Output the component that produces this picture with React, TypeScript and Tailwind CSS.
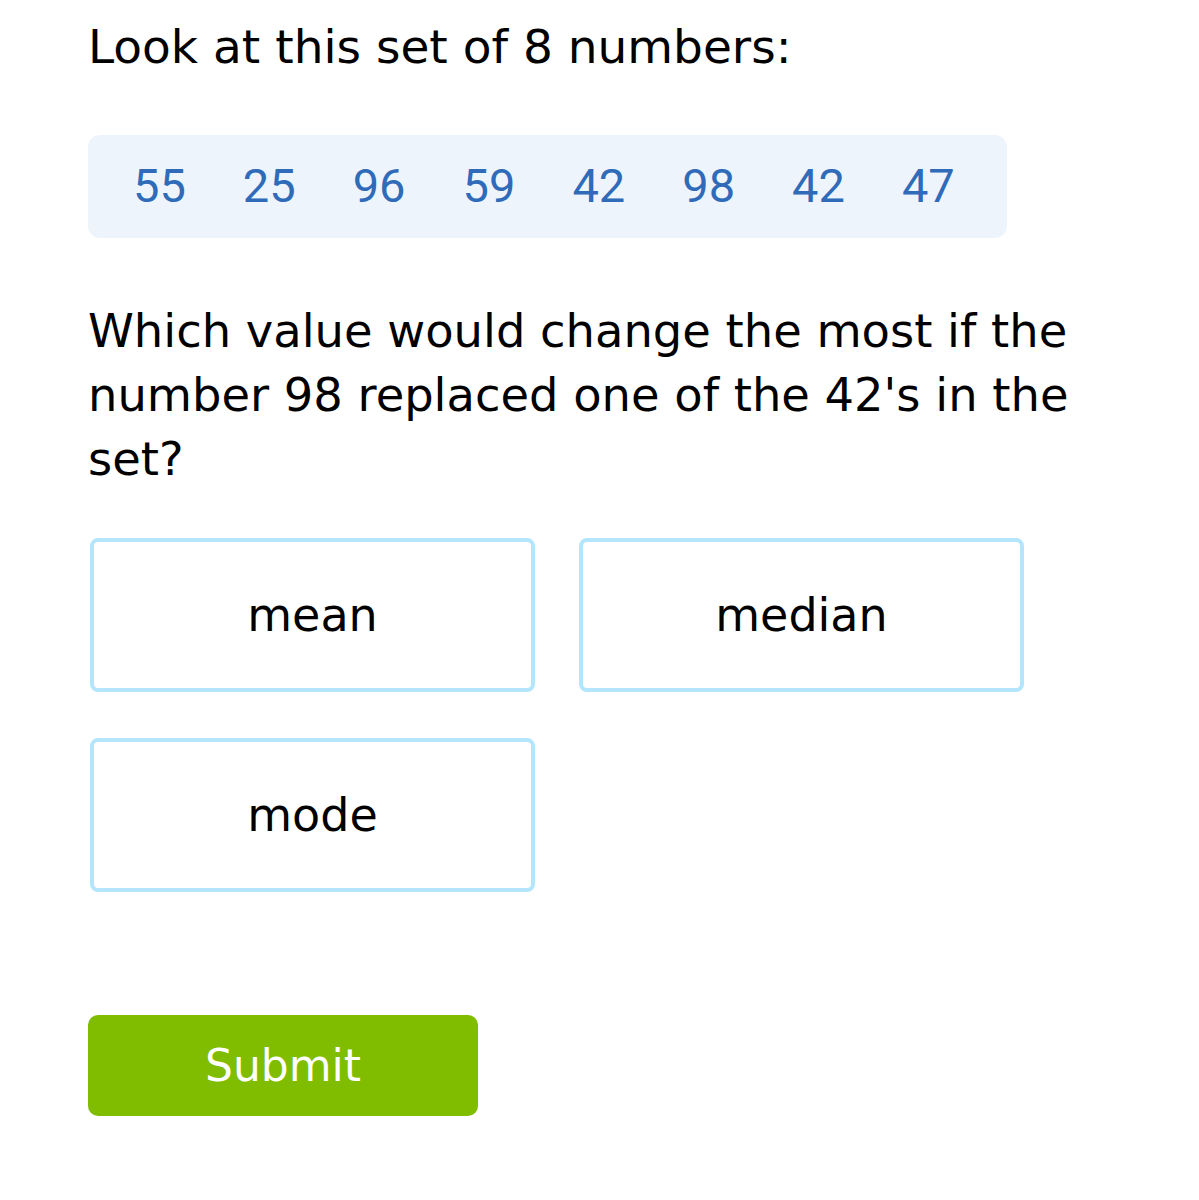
const numbers = [55, 25, 96, 59, 42, 98, 42, 47];
const choices = ["mean", "median", "mode"];

export default function App() {
  return (
    <div className="min-h-[1200px] bg-white px-[88px] pt-[15px] text-black font-['DejaVu_Sans',sans-serif]">
      <p className="text-[47px] leading-[64px]">Look at this set of 8 numbers:</p>

      {/* number set */}
      <div className="mt-[56px] flex h-[103px] w-[919px] items-center gap-[57px] rounded-[12px] bg-[#eef4fc] pl-[45px] font-['Roboto',sans-serif] text-[47px] text-[#2f6bb8]">
        {numbers.map((n, i) => (
          <span key={i}>{n}</span>
        ))}
      </div>

      <p className="mt-[61px] w-[1000px] text-[46.4px] leading-[64px]">
        Which value would change the most if the number 98 replaced one of the 42's in the set?
      </p>

      {/* answer choices */}
      <div className="ml-[2px] mt-[47px] grid grid-cols-[445px_445px] gap-x-[44px] gap-y-[46px]">
        {choices.map((c) => (
          <button
            key={c}
            className="flex h-[154px] items-center justify-center rounded-[8px] border-4 border-[#b3e5fc] bg-white text-[46px]"
          >
            {c}
          </button>
        ))}
      </div>

      <button className="mt-[123px] h-[101px] w-[390px] rounded-[10px] bg-[#80bc00] text-[44px] text-white">
        Submit
      </button>
    </div>
  );
}
